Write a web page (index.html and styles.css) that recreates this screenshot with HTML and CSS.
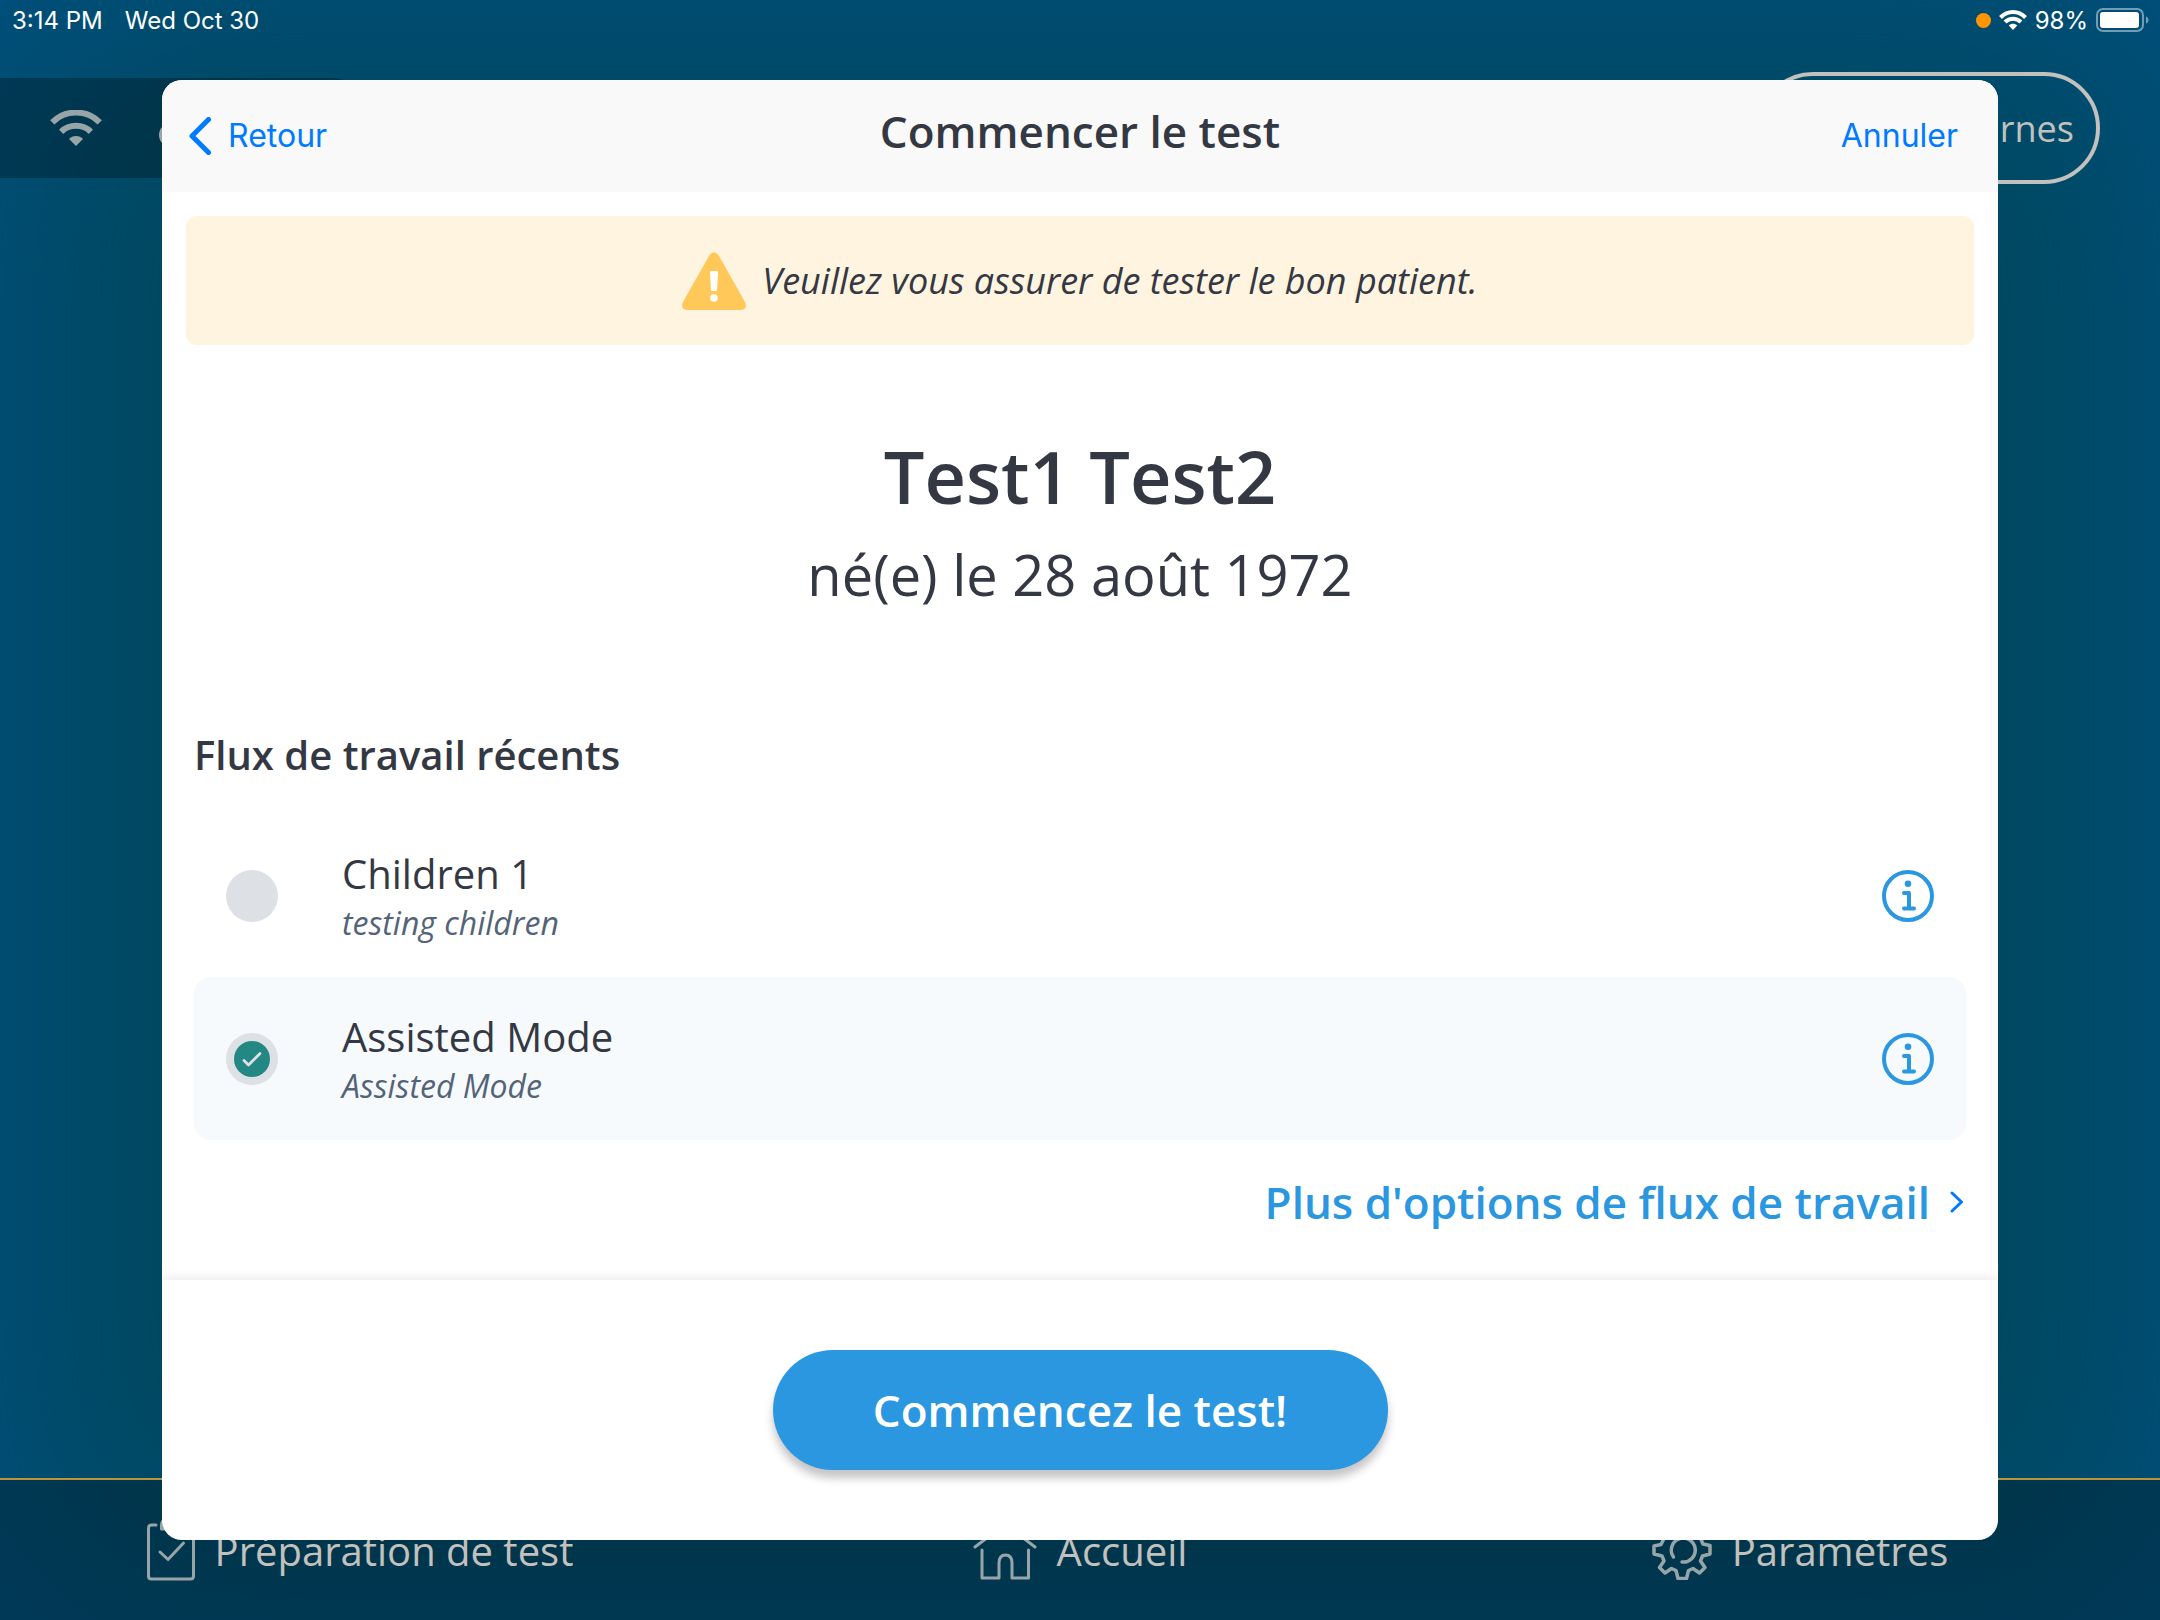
FILE: index.html
```html
<!DOCTYPE html>
<html lang="fr">
<head>
  <meta charset="UTF-8">
  <meta name="viewport" content="width=device-width, initial-scale=1.0">
  <title>Commencer le test</title>
  <link rel="stylesheet" href="styles.css">
</head>
<body>
  <div class="app">
    <div class="status-bar">
      <div class="status-left">
        <span>3:14 PM</span>
        <span>Wed Oct 30</span>
      </div>
      <div class="status-right">
        <span class="mic-dot"></span>
        <svg width="28" height="20" viewBox="0 0 28 20" fill="none" stroke="#fff" stroke-width="4">
          <path d="M1.500 7.500 C8.500 0.300 19.500 0.300 26.500 7.500"/>
          <path d="M6 12 C10.500 7.500 17.500 7.500 22 12"/>
          <path d="M14 20 L9.800 15.600 C12 13.200 16 13.200 18.200 15.600 Z" fill="#fff" stroke="none"/>
        </svg>
        <span>98%</span>
        <svg width="54" height="24" viewBox="0 0 54 24">
          <rect x="1" y="1" width="46" height="22" rx="6" fill="none" stroke="#fff" stroke-opacity="0.45" stroke-width="2"/>
          <rect x="4" y="4" width="39" height="16" rx="3" fill="#fff"/>
          <path d="M50 8.500 C53.300 9.500 53.300 14.500 50 15.500 Z" fill="#fff" fill-opacity="0.45"/>
        </svg>
      </div>
    </div>

    <div class="toolbar">
      <div class="connection">
        <svg width="52" height="36" viewBox="0 0 52 36" fill="none" stroke="#98a5a8" stroke-width="6">
          <path d="M2.300 12.300 C15 -0.700 37 -0.700 49.700 12.300"/>
          <path d="M11.200 21.800 C19 13.800 33 13.800 40.800 21.800"/>
          <path d="M26 36 L19 29 C22 25 30 25 33 29 Z" fill="#98a5a8" stroke="none"/>
        </svg>
        <span class="connection-dot"></span>
      </div>
      <button class="pill" type="button">rnes</button>
    </div>

    <nav class="tabs">
      <a href="#">
        <svg width="48" height="64" viewBox="1 0 48 64" fill="none" stroke="#98a5a8" stroke-width="3" stroke-linecap="round" stroke-linejoin="round">
          <path d="M10 7 H5.500 Q2.500 7 2.500 10 V58 Q2.500 61 5.500 61 H44.500 Q47.500 61 47.500 58 V10 Q47.500 7 44.500 7 H40"/>
          <path d="M15.500 11 V7 Q15.500 2 20 2 H30 Q34.500 2 34.500 7 V11 Z"/>
          <path d="M14 34 L22 41.500 L37.500 25"/>
        </svg>
        <span>Préparation de test</span>
      </a>
      <a href="#">
        <svg width="64" height="60" viewBox="0 0 64 60" fill="none" stroke="#98a5a8" stroke-width="3" stroke-linecap="round" stroke-linejoin="round">
          <path d="M2 27 L32 4 L62 27"/>
          <path d="M9 30 V58 H26 V43 Q26 35 32.500 35 Q39 35 39 43 V58 H55.500 V30"/>
        </svg>
        <span>Accueil</span>
      </a>
      <a href="#">
        <svg width="60" height="60" viewBox="0 0 60 60" fill="none" stroke="#98a5a8" stroke-width="3.500" stroke-linecap="round" stroke-linejoin="round">
          <path d="M25 2 H35 L36.500 10 L41 12 L47.500 7.500 L53 13 L49 19.500 L51 24 L58 25.500 V34 L50.500 36 L48.500 41 L53 47.500 L47.500 53 L41 48.500 L36.500 50.500 L34.500 58.500 H26 L24 50.500 L19.500 48.500 L13 53 L7.500 47.500 L12 41 L10 36 L2 34 V26 L9 24.500 L11.500 19.500 L7 13 L12.500 7.500 L19 12 L23.500 10 Z"/>
          <path d="M21.500 37 A12 12 0 1 1 30 42"/>
        </svg>
        <span>Paramètres</span>
      </a>
    </nav>
  </div>

  <div class="overlay">
    <div class="modal" role="dialog" aria-labelledby="modalTitle">
      <header class="modal-header">
        <button class="nav-button back" type="button">
          <svg width="24" height="38" viewBox="0 0 24 38" fill="none" stroke="#007aff" stroke-width="5" stroke-linecap="round" stroke-linejoin="round">
            <path d="M20.500 2.500 L4 19 L20.500 35.500"/>
          </svg>
          <span>Retour</span>
        </button>
        <h1 id="modalTitle">Commencer le test</h1>
        <button class="nav-button cancel" type="button">Annuler</button>
      </header>

      <div class="warning">
        <svg width="64" height="58" viewBox="0 0 64 58">
          <path d="M27.500 3 Q32 -2.500 36.500 3 L63 50 Q66 57 59 58 H5 Q-2 57 1 50 Z" fill="#ffc859"/>
          <path d="M28 20 Q28 19 29 19 H35 Q36 19 36 20 L35 38 Q35 39 34 39 H30 Q29 39 29 38 Z" fill="#fff"/>
          <circle cx="32" cy="46" r="3.800" fill="#fff"/>
        </svg>
        <span>Veuillez vous assurer de tester le bon patient.</span>
      </div>

      <div class="patient">
        <h2>Test1 Test2</h2>
        <p>né(e) le 28 août 1972</p>
      </div>

      <section class="workflows">
        <h3>Flux de travail récents</h3>

        <div class="workflow">
          <span class="radio">
            <input type="radio" name="workflow" id="children">
          </span>
          <label for="children">
            <span class="workflow-name">Children 1</span>
            <span class="workflow-desc">testing children</span>
          </label>
          <button class="info" type="button" aria-label="Info">
            <svg width="52" height="52" viewBox="0 0 52 52" fill="none" stroke="#2a97e0" stroke-width="4" stroke-linecap="round" stroke-linejoin="round">
              <circle cx="26" cy="26" r="24"/>
              <circle cx="26" cy="13.700" r="3.300" fill="#2a97e0" stroke="none"/>
              <path d="M22 23 H27 V38.500 M22 38.500 H32"/>
            </svg>
          </button>
        </div>

        <div class="workflow selected">
          <span class="radio">
            <input type="radio" name="workflow" id="assisted" checked>
            <svg width="36" height="36" viewBox="0 0 36 36" fill="none">
              <circle cx="18" cy="18" r="18" fill="#238783"/>
              <path d="M10 19.500 L14.500 24 L26 12.500" stroke="#dde1e6" stroke-width="2.800" stroke-linecap="round" stroke-linejoin="round"/>
            </svg>
          </span>
          <label for="assisted">
            <span class="workflow-name">Assisted Mode</span>
            <span class="workflow-desc">Assisted Mode</span>
          </label>
          <button class="info" type="button" aria-label="Info">
            <svg width="52" height="52" viewBox="0 0 52 52" fill="none" stroke="#2a97e0" stroke-width="4" stroke-linecap="round" stroke-linejoin="round">
              <circle cx="26" cy="26" r="24"/>
              <circle cx="26" cy="13.700" r="3.300" fill="#2a97e0" stroke="none"/>
              <path d="M22 23 H27 V38.500 M22 38.500 H32"/>
            </svg>
          </button>
        </div>

        <a class="more" href="#">
          <span>Plus d'options de flux de travail</span>
          <svg width="16" height="22" viewBox="0 0 16 22" fill="none" stroke="#007aff" stroke-width="3" stroke-linecap="round" stroke-linejoin="round">
            <path d="M2 2 L11.500 11 L2 20"/>
          </svg>
        </a>
      </section>

      <footer class="modal-footer">
        <button class="start" type="button">Commencez le test!</button>
      </footer>
    </div>
  </div>
</body>
</html>
```
FILE: styles.css
```css
* {
  box-sizing: border-box;
}
body {
  margin: 0;
  font-family: "Open Sans", sans-serif;
  color: #343843;
}
h1, h2, h3, p {
  margin: 0;
}
h1, h2, h3 {
  font-weight: 600;
}
button {
  margin: 0;
  padding: 0;
  border: none;
  background: none;
  font-family: inherit;
  cursor: pointer;
}
a {
  text-decoration: none;
}
svg {
  display: block;
  flex: none;
}

/* Screen behind the dialog */
.app {
  display: flex;
  flex-direction: column;
  min-height: 100vh;
  background-color: #00485f;
  box-shadow: inset 0 0 260px #005284;
}
.status-bar {
  display: flex;
  justify-content: space-between;
  align-items: center;
  height: 40px;
  padding: 0 10px 0 12px;
  color: #fff;
  font-family: Inter, sans-serif;
  font-size: 24px;
}
.status-left {
  display: flex;
  gap: 22px;
}
.status-right {
  display: flex;
  align-items: center;
  gap: 8px;
}
.mic-dot {
  width: 15px;
  height: 15px;
  border-radius: 50%;
  background-color: #ff9500;
}
.toolbar {
  display: flex;
  justify-content: space-between;
  align-items: center;
  padding: 32px 60px 0 0;
}
.connection {
  display: flex;
  align-items: center;
  gap: 57px;
  width: 380px;
  height: 100px;
  padding-left: 50px;
  border-radius: 0 50px 50px 0;
  background-color: rgba(0, 0, 0, 0.27);
}
.connection-dot {
  width: 24px;
  height: 24px;
  margin-top: 14px;
  border-radius: 50%;
  background-color: #98a5a8;
}
.pill {
  width: 343px;
  height: 112px;
  padding: 0 22px;
  border: 4px solid #c2c1bd;
  border-radius: 56px;
  color: #c2c1bd;
  font-size: 36px;
  text-align: right;
}
.tabs {
  display: grid;
  grid-template-columns: 1fr 1fr 1fr;
  height: 142px;
  margin-top: auto;
  border-top: 2px solid #b8943a;
  background-color: rgba(0, 0, 0, 0.27);
}
.tabs a {
  display: flex;
  justify-content: center;
  align-items: center;
  gap: 20px;
  color: #c2c1bd;
  font-size: 40px;
}

/* Dialog */
.overlay {
  position: absolute;
  inset: 0;
  display: flex;
  justify-content: center;
  padding: 80px 0;
}
.modal {
  display: flex;
  flex-direction: column;
  width: 85%;
  border-radius: 20px;
  background-color: #fff;
  overflow: hidden;
}
.modal-header {
  display: grid;
  grid-template-columns: 1fr auto 1fr;
  align-items: center;
  min-height: 112px;
  padding: 0 24px;
  background-color: #f9f9f9;
}
.modal-header h1 {
  padding-bottom: 10px;
  font-size: 44px;
  line-height: 60px;
}
.nav-button {
  color: #007aff;
  font-family: Inter, sans-serif;
  font-size: 32px;
  line-height: 40px;
}
.back {
  display: flex;
  align-items: center;
  gap: 16px;
  justify-self: start;
  padding-left: 2px;
}
.cancel {
  justify-self: end;
  padding-right: 16px;
}
.warning {
  display: flex;
  justify-content: center;
  align-items: center;
  gap: 16px;
  min-height: 129px;
  margin: 24px 24px 0;
  border-radius: 10px;
  background-color: #fff4e0;
  font-size: 36px;
  font-style: italic;
}
.patient {
  display: flex;
  flex-direction: column;
  gap: 10px;
  margin-top: 83px;
  text-align: center;
}
.patient h2 {
  font-size: 72px;
  line-height: 96px;
}
.patient p {
  font-size: 56px;
  line-height: 80px;
}
.workflows {
  display: flex;
  flex-direction: column;
  margin: 113px 32px 48px;
}
.workflows h3 {
  margin-bottom: 31px;
  font-size: 40px;
  line-height: 56px;
}
.workflow {
  display: flex;
  align-items: center;
  min-height: 163px;
  padding: 32px;
  border-radius: 16px;
}
.selected {
  background-color: #f6fafd;
}
.radio {
  position: relative;
  width: 52px;
  height: 52px;
}
.radio input {
  display: block;
  width: 52px;
  height: 52px;
  margin: 0;
  border-radius: 50%;
  background-color: #dde1e6;
  appearance: none;
}
.radio svg {
  position: absolute;
  top: 8px;
  left: 8px;
  pointer-events: none;
}
.workflow label {
  flex: 1;
  display: flex;
  flex-direction: column;
  padding-left: 64px;
}
.workflow-name {
  font-size: 40px;
  line-height: 54px;
}
.workflow-desc {
  color: #546478;
  font-size: 32px;
  font-style: italic;
  line-height: 44px;
}
.more {
  display: flex;
  align-items: center;
  align-self: flex-end;
  gap: 20px;
  margin-top: 32px;
  color: #2a97e0;
  font-size: 44px;
  font-weight: 600;
  line-height: 60px;
}
.modal-footer {
  flex: 1;
  display: flex;
  justify-content: center;
  align-items: center;
  padding: 70px 0;
  box-shadow: 0 0 12px rgba(0, 0, 0, 0.12);
}
.start {
  width: 615px;
  height: 120px;
  border-radius: 60px;
  background-color: #2a97e0;
  box-shadow: 0 8px 8px rgba(40, 36, 48, 0.27);
  color: #fff;
  font-size: 44px;
  font-weight: 600;
}
```
